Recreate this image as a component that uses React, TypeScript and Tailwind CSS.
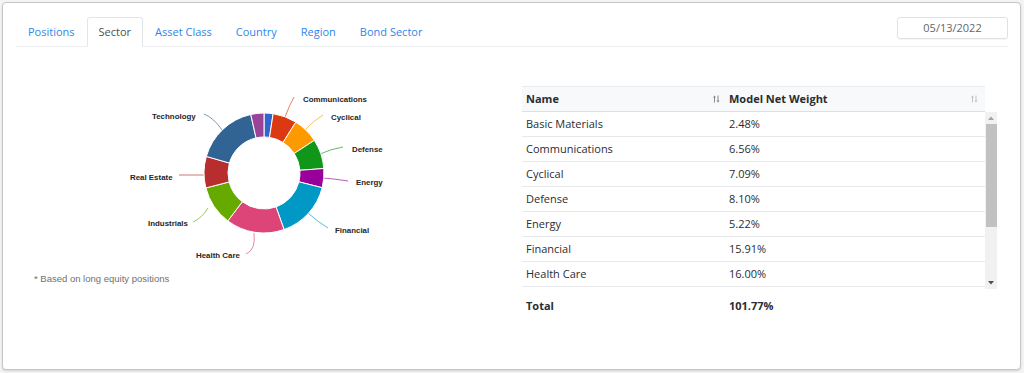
import React from "react";

const CX = 264;
const CY = 173;
const RO = 60;
const RI = 36;

const segs = [
  { name: "Basic Materials", v: 2.48, c: "#3366cc" },
  { name: "Communications", v: 6.56, c: "#dc3912" },
  { name: "Cyclical", v: 7.09, c: "#ff9900" },
  { name: "Defense", v: 8.1, c: "#109618" },
  { name: "Energy", v: 5.22, c: "#990099" },
  { name: "Financial", v: 15.91, c: "#0099c6" },
  { name: "Health Care", v: 16.0, c: "#dd4477" },
  { name: "Industrials", v: 10.9, c: "#66aa00" },
  { name: "Real Estate", v: 8.6, c: "#b82e2e" },
  { name: "Technology", v: 17.3, c: "#316395" },
  { name: "Utilities", v: 3.61, c: "#994499" },
];

const labels = [
  { t: "Communications", c: "#dc3912", d: "M285 117 Q290 104 294 97", x: 303, y: 99 },
  { t: "Cyclical", c: "#ff9900", d: "M305 130 Q313 121 323 115", x: 331, y: 117 },
  { t: "Defense", c: "#109618", d: "M320 154 Q331 149 343 147", x: 352, y: 149 },
  { t: "Energy", c: "#990099", d: "M323 178 Q336 179 348 181", x: 356, y: 182 },
  { t: "Financial", c: "#0099c6", d: "M308 213 Q318 222 328 228", x: 335, y: 230 },
  { t: "Health Care", c: "#dd4477", d: "M254 233 Q256 250 246 254", x: 196, y: 255 },
  { t: "Industrials", c: "#66aa00", d: "M208 208 Q202 218 193 222", x: 148, y: 223 },
  { t: "Real Estate", c: "#b82e2e", d: "M204 175 L179 175", x: 130, y: 177 },
  { t: "Technology", c: "#316395", d: "M222 130 Q214 118 204 114", x: 152, y: 116 },
];

function pt(r: number, a: number) {
  const rad = (a * Math.PI) / 180;
  return [CX + r * Math.sin(rad), CY - r * Math.cos(rad)];
}

function arc(a0: number, a1: number) {
  const large = a1 - a0 > 180 ? 1 : 0;
  const [x0, y0] = pt(RO, a0);
  const [x1, y1] = pt(RO, a1);
  const [x2, y2] = pt(RI, a1);
  const [x3, y3] = pt(RI, a0);
  return `M${x0} ${y0} A${RO} ${RO} 0 ${large} 1 ${x1} ${y1} L${x2} ${y2} A${RI} ${RI} 0 ${large} 0 ${x3} ${y3} Z`;
}

function Donut() {
  const total = segs.reduce((s, x) => s + x.v, 0);
  let acc = 0;
  const paths = segs.map((s) => {
    const a0 = (acc / total) * 360;
    acc += s.v;
    const a1 = (acc / total) * 360;
    return <path key={s.name} d={arc(a0, a1)} fill={s.c} stroke="#ffffff" strokeWidth={1} />;
  });
  return (
    <svg width={506} height={225} viewBox="16 47 506 225" className="block">
      {labels.map((l) => (
        <path key={l.t + "l"} d={l.d} fill="none" stroke={l.c} strokeOpacity={0.65} strokeWidth={1} />
      ))}
      {paths}
      {labels.map((l) => (
        <text
          key={l.t}
          x={l.x}
          y={l.y}
          dominantBaseline="central"
          fontFamily="'Liberation Sans', Arial, sans-serif"
          fontSize={7.9}
          fontWeight={700}
          fill="#262626"
          stroke="#ffffff"
          strokeWidth={2}
          strokeLinejoin="round"
          paintOrder="stroke"
        >
          {l.t}
        </text>
      ))}
    </svg>
  );
}

function SortIcon({ color }: { color: string }) {
  return (
    <svg width="7" height="8" viewBox="0 0 7 8" className="block">
      <path d="M1.5 7.5 V1" stroke={color} strokeWidth={1} fill="none" />
      <path d="M0 2.5 L1.5 0.5 L3 2.5" fill={color} />
      <path d="M5 0.5 V7" stroke={color} strokeWidth={1} fill="none" />
      <path d="M3.5 5.5 L5 7.5 L6.5 5.5" fill={color} />
    </svg>
  );
}

const rows = [
  ["Basic Materials", "2.48%"],
  ["Communications", "6.56%"],
  ["Cyclical", "7.09%"],
  ["Defense", "8.10%"],
  ["Energy", "5.22%"],
  ["Financial", "15.91%"],
  ["Health Care", "16.00%"],
];

const tabs = ["Positions", "Sector", "Asset Class", "Country", "Region", "Bond Sector"];

export default function App() {
  return (
    <div className="w-[1024px] h-[373px] bg-[#f4f4f4] p-[2px] font-['Open_Sans',sans-serif]">
      <div className="w-[1019px] h-[368px] bg-white border border-[#c6c6c6] rounded-[4px] shadow-[0_1px_2px_rgba(0,0,0,0.15)] pt-[14px] pl-[13px] pr-[12px]">
        <div className="flex items-start justify-between h-[30px] border-b border-[#eceef0]">
          <div className="flex h-[30px]">
            {tabs.map((t) => (
              <div
                key={t}
                className={
                  t === "Sector"
                    ? "h-[30px] px-[11px] border border-[#e3e6e9] border-b-white rounded-t-[3px] bg-white text-[11px] leading-[28px] text-[#495057]"
                    : "h-[30px] px-[11px] border border-transparent text-[11px] leading-[28px] text-[#2f86eb]"
                }
              >
                {t}
              </div>
            ))}
          </div>
          <div className="w-[111px] h-[22px] border border-[#dfe2e5] rounded-[3px] text-[11px] leading-[20px] text-center text-[#666666] shadow-[0_1px_1px_rgba(0,0,0,0.04)]">
            05/13/2022
          </div>
        </div>
        <div className="flex">
          <div className="w-[506px]">
            <Donut />
            <div className="pl-[18px] text-[9.5px] leading-[14px] text-[#707070] font-['Liberation_Sans',Arial,sans-serif]">
              * Based on long equity positions
            </div>
          </div>
          <div className="w-[475px] mt-[39px] text-[11px] text-[#2a2d31]">
            <div className="w-[463px] h-[26px] flex bg-[#f8f9fa] border-t border-[#e9ecef] border-b border-b-[#dcdfe3] font-bold">
              <div className="w-[203px] flex items-center justify-between pl-[4px] pr-[5px]">
                <span>Name</span>
                <SortIcon color="#8a8a8a" />
              </div>
              <div className="flex-1 flex items-center justify-between pl-[4px] pr-[7px]">
                <span>Model Net Weight</span>
                <SortIcon color="#c4c4c4" />
              </div>
            </div>
            <div className="flex h-[177px]">
              <div className="w-[463px] h-[177px]">
                {rows.map(([n, v]) => (
                  <div key={n} className="h-[25px] flex items-center border-b border-[#e6e8eb]">
                    <div className="w-[203px] pl-[4px]">{n}</div>
                    <div className="pl-[4px]">{v}</div>
                  </div>
                ))}
              </div>
              <div className="w-[12px] h-[177px] bg-[#f1f1f1] flex flex-col items-center">
                <div className="h-[12px] flex items-center justify-center">
                  <svg width="6" height="4" viewBox="0 0 6 4"><path d="M0 4 L3 0.5 L6 4 Z" fill="#a3a3a3" /></svg>
                </div>
                <div className="w-[11px] h-[103px] bg-[#c1c1c1]"></div>
                <div className="flex-1"></div>
                <div className="h-[12px] flex items-center justify-center">
                  <svg width="6" height="4" viewBox="0 0 6 4"><path d="M0 0 L3 3.5 L6 0 Z" fill="#505050" /></svg>
                </div>
              </div>
            </div>
            <div className="w-[463px] h-[24px] mt-[5px] flex items-center font-bold">
              <div className="w-[203px] pl-[4px]">Total</div>
              <div className="pl-[4px]">101.77%</div>
            </div>
          </div>
        </div>
      </div>
    </div>
  );
}
